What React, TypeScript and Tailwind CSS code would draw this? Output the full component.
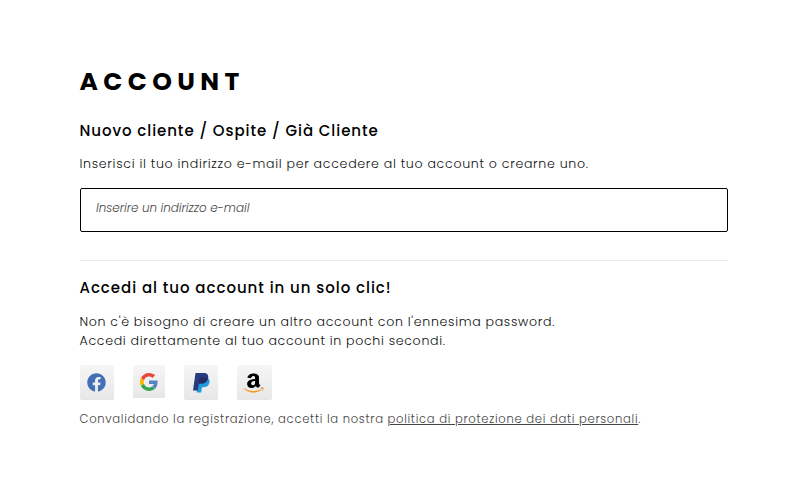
import React from "react";
import { FaAmazon, FaFacebook } from "react-icons/fa";

const GoogleIcon = () => (
  <svg viewBox="0 0 48 48" className="w-[18px] h-[18px]">
    <path fill="#e8453c" d="M24 9.5c3.5 0 6.7 1.2 9.2 3.6l6.9-6.9C35.9 2.4 30.5 0 24 0 14.6 0 6.5 5.4 2.6 13.2l8 6.2C12.4 13.7 17.7 9.5 24 9.5z" />
    <path fill="#5683c8" d="M47 20H24v9h12.9c-.6 3-2.2 5.500-4.700 7.200l7.700 6C44.400 38 47.700 30 47 20z" />
    <path fill="#fbb605" d="M10.500 28.600a14.500 14.500 0 0 1 0-9.200l-8-6.200a24 24 0 0 0 0 21.600z" />
    <path fill="#34a353" d="M24 48c6.500 0 11.900-2.100 15.900-5.800l-7.700-6c-2.200 1.500-4.900 2.300-8.200 2.300-6.300 0-11.600-4.200-13.500-9.900l-8 6.200C6.500 42.600 14.600 48 24 48z" />
  </svg>
);

const PaypalIcon = () => (
  <svg viewBox="0 0 17 20" className="w-[17px] h-[20px]">
    <path fill="#1f9bde" d="M5 5h9.500c1.900.9 2.500 2.700 1.900 5-.8 3-3 4.300-6.200 4.300H9l-.9 5.200H3.700z" />
    <path fill="#263b80" d="M2.500 0h8.100c3.600 0 5.200 2 4.500 5.200-.8 3.700-3.300 5.400-7 5.400H6L4.700 17.500H0z" />
    <path fill="#222d65" d="M6.600 4.500h8.500c-.9 4.300-3.300 6.100-7 6.100H5.600z" />
  </svg>
);

const AmazonIcon = () => (
  <>
    <svg className="absolute w-0 h-0">
      <linearGradient id="amazon" x1="0" y1="0" x2="0" y2="1">
        <stop offset="0.76" stopColor="#000" />
        <stop offset="0.76" stopColor="#f59a23" />
      </linearGradient>
    </svg>
    <FaAmazon className="w-[21px] h-[22px] -ml-[1px]" fill="url(#amazon)" preserveAspectRatio="none" />
  </>
);

const providers = [
  { name: "Facebook", icon: <FaFacebook className="w-[19px] h-[19px] text-[#4270b7]" />, size: "w-[34px] h-[35px] mr-[19px] rounded-[2px]" },
  { name: "Google", icon: <GoogleIcon />, size: "w-[32px] h-[33px] mr-[19px]" },
  { name: "PayPal", icon: <PaypalIcon />, size: "w-[34px] h-[35px] mr-[19px] rounded-[2px] pl-[1px] pt-[1px]" },
  { name: "Amazon", icon: <AmazonIcon />, size: "w-[35px] h-[35px] rounded-[2px]" },
];

const App = () => {
  return (
    <main className="w-[804px] h-[494px] bg-white pl-[79.5px] pr-[76px] pt-[67px] font-['Poppins','Inter',sans-serif] whitespace-nowrap text-black">
      <h1 className="text-[25px] leading-[30px] font-bold tracking-[5.4px]">
        ACCOUNT
      </h1>

      {/* Email */}
      <h2 className="mt-[22px] text-[15px] leading-[24px] font-medium tracking-[0.93px]">
        Nuovo cliente / Ospite / Già Cliente
      </h2>
      <p className="mt-[11px] text-[12.6px] leading-[19px] font-light tracking-[0.69px] text-[#111]">
        Inserisci il tuo indirizzo e-mail per accedere al tuo account o crearne uno.
      </p>
      <input
        type="email"
        placeholder="Inserire un indirizzo e-mail"
        className="block mt-[15px] w-full h-[44px] border border-black rounded-[2px] pl-[15.5px] pb-[4px] text-[11.9px] italic font-light outline-none placeholder:text-[#444]"
      />

      <hr className="mt-[28px] border-0 h-px bg-[#eee9e1]" />

      {/* Social login */}
      <h2 className="mt-[15px] text-[15px] leading-[24px] font-medium tracking-[0.95px]">
        Accedi al tuo account in un solo clic!
      </h2>
      <p className="mt-[12px] text-[12.6px] leading-[19px] font-light tracking-[0.67px] text-[#111]">
        Non c'è bisogno di creare un altro account con l'ennesima password.
      </p>
      <p className="text-[12.6px] leading-[19px] font-light tracking-[0.67px] text-[#111]">
        Accedi direttamente al tuo account in pochi secondi.
      </p>
      <div className="mt-[15px] flex items-start">
        {providers.map((provider) => (
          <button
            key={provider.name}
            aria-label={provider.name}
            className={`flex shrink-0 items-center justify-center bg-gradient-to-b from-[#f6f6f6] to-[#e7e7e7] ${provider.size}`}
          >
            {provider.icon}
          </button>
        ))}
      </div>
      <p className="mt-[10px] text-[11.6px] leading-[18px] font-light tracking-[0.69px] text-[#444]">
        Convalidando la registrazione, accetti la nostra{" "}
        <a href="#" className="underline">politica di protezione dei dati personali</a>.
      </p>
    </main>
  );
};

export default App;
